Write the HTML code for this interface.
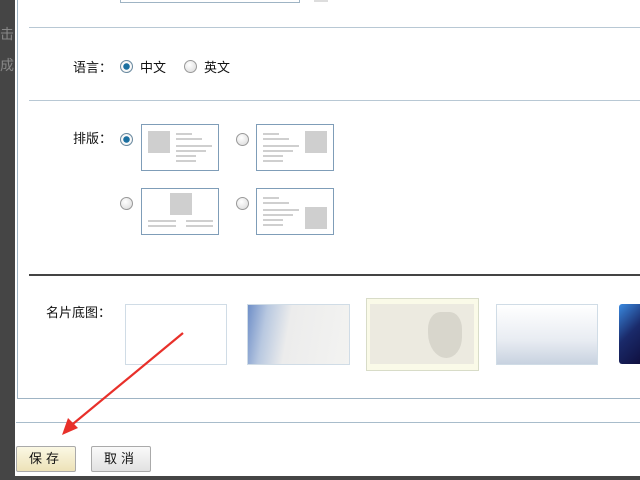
<!DOCTYPE html>
<html><head><meta charset="utf-8"><style>
body{margin:0;width:640px;height:480px;overflow:hidden;background:#454545;position:relative;font-family:"Liberation Sans","Noto Sans CJK SC",sans-serif;font-size:13px;color:#111}
.a{position:absolute}
.panel{left:15px;top:0;width:625px;height:476px;background:#fff}
.hl{position:absolute;height:1px;background:#b8c8d4}
.radio{position:absolute;width:11px;height:11px;border-radius:50%;border:1px solid #999;background:radial-gradient(circle at 40% 35%,#fff,#d8d8d8)}
.radio.on{background:radial-gradient(circle,#1a6fa0 0 3px,#fff 3.5px,#ddd 100%);border-color:#6a8aa0}
.lay{position:absolute;width:76px;height:45px;border:1px solid #7f9db8;background:#fff}
.sq{position:absolute;width:22px;height:22px;background:#cfcfcf}
.ln{position:absolute;height:2px;background:#cfcfcf}
.th{position:absolute;border:1px solid #d0dce6}
.btn{position:absolute;height:24px;border:1px solid #aaa;border-radius:2px;font-size:13px;line-height:24px;text-align:center;letter-spacing:4px}
</style></head><body>
<div class="a" style="left:0;top:24px;color:#888;font-size:14px">击</div>
<div class="a" style="left:0;top:55px;color:#888;font-size:14px">成</div>
<div class="a panel"></div>
<div class="a" style="left:17px;top:0;width:1px;height:398px;background:#9fb4c4"></div>
<div class="hl" style="left:17px;top:398px;width:623px;background:#9fb4c4"></div>
<div class="a" style="left:120px;top:0;width:178px;height:2px;border:1px solid #9fb4c4;border-top:none"></div>
<div class="a" style="left:314px;top:0;width:14px;height:2px;background:#ddd"></div>
<div class="hl" style="left:29px;top:27px;width:611px"></div>
<div class="a" style="left:73px;top:57px">语言：</div>
<div class="radio on" style="left:120px;top:60px"></div>
<div class="a" style="left:140px;top:57px">中文</div>
<div class="radio" style="left:184px;top:60px"></div>
<div class="a" style="left:204px;top:57px">英文</div>
<div class="hl" style="left:29px;top:100px;width:611px"></div>
<div class="a" style="left:73px;top:128px">排版：</div>
<div class="radio on" style="left:120px;top:133px"></div>
<div class="lay" style="left:141px;top:124px"><div class="sq" style="left:6px;top:6px"></div><div class="ln" style="left:34px;top:8px;width:16px"></div><div class="ln" style="left:34px;top:13px;width:26px"></div><div class="ln" style="left:34px;top:20px;width:36px"></div><div class="ln" style="left:34px;top:25px;width:30px"></div><div class="ln" style="left:34px;top:30px;width:20px"></div><div class="ln" style="left:34px;top:35px;width:20px"></div></div>
<div class="radio" style="left:236px;top:133px"></div>
<div class="lay" style="left:256px;top:124px"><div class="sq" style="right:6px;top:6px"></div><div class="ln" style="left:6px;top:8px;width:16px"></div><div class="ln" style="left:6px;top:13px;width:26px"></div><div class="ln" style="left:6px;top:20px;width:36px"></div><div class="ln" style="left:6px;top:25px;width:30px"></div><div class="ln" style="left:6px;top:30px;width:20px"></div><div class="ln" style="left:6px;top:35px;width:20px"></div></div>
<div class="radio" style="left:120px;top:197px"></div>
<div class="lay" style="left:141px;top:188px"><div class="sq" style="left:28px;top:4px"></div><div class="ln" style="left:6px;top:31px;width:28px"></div><div class="ln" style="left:6px;top:36px;width:28px"></div><div class="ln" style="left:44px;top:31px;width:27px"></div><div class="ln" style="left:44px;top:36px;width:27px"></div></div>
<div class="radio" style="left:236px;top:197px"></div>
<div class="lay" style="left:256px;top:188px"><div class="sq" style="right:6px;top:18px"></div><div class="ln" style="left:6px;top:8px;width:16px"></div><div class="ln" style="left:6px;top:13px;width:26px"></div><div class="ln" style="left:6px;top:20px;width:36px"></div><div class="ln" style="left:6px;top:25px;width:30px"></div><div class="ln" style="left:6px;top:30px;width:20px"></div><div class="ln" style="left:6px;top:35px;width:20px"></div></div>
<div class="hl" style="left:29px;top:274px;width:611px;height:2px;background:#444"></div>
<div class="a" style="left:46px;top:302px">名片底图：</div>
<div class="th" style="left:125px;top:304px;width:100px;height:59px;background:#fff"></div>
<div class="th" style="left:247px;top:304px;width:101px;height:59px;background:linear-gradient(100deg,#6f8fc8 0%,#b8c8e0 18%,#ececec 40%,#f3f3f1 100%)"></div>
<div class="th" style="left:366px;top:298px;width:111px;height:71px;background:#fafae8;border-color:#d8dcc8"></div>
<div class="a" style="left:370px;top:304px;width:104px;height:60px;background:#eceae0"><div class="a" style="left:58px;top:8px;width:34px;height:46px;background:#d8d6cc;border-radius:40% 40% 50% 60%"></div></div>
<div class="th" style="left:496px;top:304px;width:100px;height:59px;background:linear-gradient(#fff,#e8ecf2 60%,#c8d2e0)"></div>
<div class="a" style="left:619px;top:304px;width:21px;height:60px;background:linear-gradient(135deg,#3a8ae0,#1a2a6a 50%,#101040);border-radius:3px 0 0 3px"></div>
<div class="hl" style="left:16px;top:422px;width:624px;background:#a8bccb"></div>
<div class="btn" style="left:16px;top:446px;width:58px;background:linear-gradient(#fbf8e4,#ede2b8)">保存</div>
<div class="btn" style="left:91px;top:446px;width:58px;background:linear-gradient(#fafafa,#e2e2e2)">取消</div>
<svg class="a" style="left:0;top:0" width="640" height="480"><line x1="183" y1="333" x2="68" y2="428" stroke="#e8302a" stroke-width="2.2"/><polygon points="62,435 68,418 78,428" fill="#e8302a"/></svg>
</body></html>
